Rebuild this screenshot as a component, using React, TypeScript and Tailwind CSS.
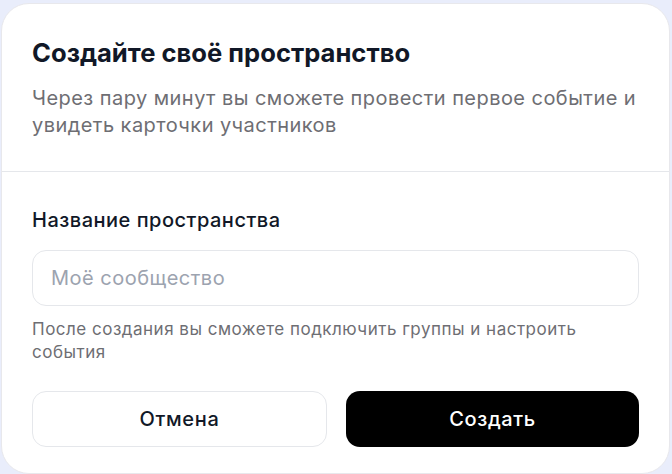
import React from 'react';

const App = () => {
  return (
    <div className="w-[672px] h-[474px] bg-[#e9edfb] overflow-hidden" style={{ fontFamily: 'Inter, "Noto Sans", sans-serif' }}>
      <div className="ml-[1px] mt-[3px] w-[669px] h-[471px] bg-white rounded-[28px] border border-[#e8e8ec] flex flex-col">
        <div className="px-[30px] pt-[33px] pb-[32px] border-b border-[#e5e7eb]">
          <h1 className="text-[25.6px] leading-[32px] font-bold text-[#111827]">Создайте своё пространство</h1>
          <p className="mt-[16px] text-[20px] leading-[27px] tracking-[0.45px] text-[#6e6e73]">
            Через пару минут вы сможете провести первое событие и увидеть карточки участников
          </p>
        </div>
        <div className="px-[30px] pt-[34px]">
          <label className="block text-[20px] leading-[28px] tracking-[0.5px] font-medium text-[#111827]">
            Название пространства
          </label>
          <input
            className="mt-[16px] w-full h-[56px] rounded-[14px] border border-[#e5e7eb] px-[18px] text-[20px] tracking-[0.5px] text-[#111827] placeholder:text-[#9ca3af] outline-none"
            placeholder="Моё сообщество"
          />
          <p className="mt-[12px] text-[17px] leading-[23px] tracking-[0.5px] text-[#6e6e73]">
            После создания вы сможете подключить группы и настроить события
          </p>
          <div className="mt-[27px] flex gap-[19px]">
            <button className="flex-1 h-[56px] rounded-[14px] border border-[#e5e7eb] bg-white text-[20px] tracking-[0.7px] font-medium text-[#111827]">
              Отмена
            </button>
            <button className="flex-1 h-[56px] rounded-[14px] bg-black text-[20px] tracking-[0.6px] font-medium text-white">
              Создать
            </button>
          </div>
        </div>
      </div>
    </div>
  );
};

export default App;
